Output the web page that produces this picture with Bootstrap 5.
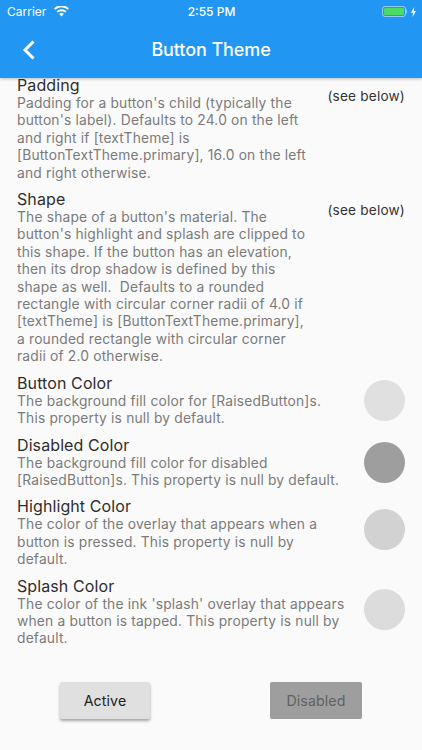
<!DOCTYPE html>
<html lang="en">
<head>
<meta charset="utf-8">
<title>Button Theme</title>
<link href="https://cdn.jsdelivr.net/npm/bootstrap@5.3.0/dist/css/bootstrap.min.css" rel="stylesheet">
<style>
html,body{height:750px;overflow:hidden}
body{width:422px;background:#fafafa;font-family:Inter,"Noto Sans",sans-serif;color:#212121}
.app-top{height:78px;background:#2196f3;color:#fff;box-shadow:0 1px 3px rgba(0,0,0,.25);position:relative;z-index:2}
.status-row{height:22px;padding:1px 6px 0 7px;font-size:12px}
.status-col{flex:1 1 0}
.title-row{height:56px;padding-bottom:2px}
.page-name{font-size:18px;font-weight:500;letter-spacing:-.1px}
.back-btn{left:22px;top:50%;transform:translateY(-50%);line-height:0}
.scroll-area{height:672px;overflow:hidden}
.list-inner{margin-top:-2px;padding:0 17px}
.prop-text{flex:1 1 0;min-width:0}
.prop-text-narrow{max-width:296px}
.prop-name{font-size:16px;line-height:19px;letter-spacing:.1px;color:#2e2e2e}
.prop-desc{font-size:13.8px;line-height:17.4px;letter-spacing:.18px;color:#7a7a7a}
.prop-val{font-size:13.6px;letter-spacing:.2px;color:#333;margin-top:10px;white-space:nowrap}
.swatch{width:41px;height:41px;border-radius:50%;flex:none;margin-left:17px}
.swatch-raised{margin-bottom:6px}
.swatch-a{background:#e0e0e0}.swatch-b{background:#9e9e9e}.swatch-c{background:#d2d2d2}.swatch-d{background:#dcdcdc}
.btn-active,.btn-off{height:37px;font-size:14.2px;font-weight:400;letter-spacing:.1px;border-radius:2px;border:0;padding:0}
.btn-active{width:90px;background:#e0e0e0;color:#212121;box-shadow:0 2px 3px rgba(0,0,0,.35)}
.btn-off{width:92px;background:#9e9e9e;color:#616161}
.btn-bar{padding:0 43px;margin-top:34px}
</style>
</head>
<body>
<header class="app-top">
  <div class="status-row d-flex align-items-center">
    <div class="status-col d-flex align-items-center gap-2">
      <span>Carrier</span>
      <svg width="15" height="11" viewBox="0 0 15 11"><path d="M7.5 10.6 5.2 8a3.2 3.2 0 0 1 4.6 0zM3.9 6.6 2.6 5.2a7 7 0 0 1 9.8 0l-1.3 1.4a5.2 5.2 0 0 0-7.2 0zM1.3 3.8 0 2.4a10.6 10.6 0 0 1 15 0l-1.3 1.4a8.8 8.8 0 0 0-12.4 0z" fill="#fff"/></svg>
    </div>
    <div class="fw-medium">2:55 PM</div>
    <div class="status-col d-flex justify-content-end align-items-center gap-1">
      <svg width="25" height="11" viewBox="0 0 25 11"><rect x=".5" y=".5" width="23" height="10" rx="2.5" fill="none" stroke="#fff" stroke-opacity=".5"/><rect x="2" y="2" width="20" height="7" rx="1.3" fill="#4cd964"/><rect x="23.8" y="3.5" width="1.2" height="4" rx=".6" fill="#fff" fill-opacity=".5"/></svg>
      <svg width="5" height="10" viewBox="0 0 5 10"><path d="M3.2 0 0 5.7h2L1.5 10 5 4H3z" fill="#fff"/></svg>
    </div>
  </div>
  <div class="title-row position-relative d-flex align-items-center justify-content-center">
    <a class="back-btn position-absolute" aria-label="Back">
      <svg width="14" height="22" viewBox="0 0 14 22"><path d="M11.5 2.5 3 11l8.5 8.5" fill="none" stroke="#fff" stroke-width="3"/></svg>
    </a>
    <div class="page-name">Button Theme</div>
  </div>
</header>
<main class="scroll-area d-flex flex-column">
  <div class="list-inner flex-grow-1">
    <div class="d-flex justify-content-between align-items-start mb-2">
      <div class="prop-text prop-text-narrow"><div class="prop-name">Padding</div><div class="prop-desc">Padding for a button's child (typically the button's label). Defaults to 24.0 on the left and right if [textTheme] is [ButtonTextTheme.primary], 16.0 on the left and right otherwise.</div></div>
      <div class="prop-val">(see below)</div>
    </div>
    <div class="d-flex justify-content-between align-items-start mb-2">
      <div class="prop-text prop-text-narrow"><div class="prop-name">Shape</div><div class="prop-desc">The shape of a button's material. The button's highlight and splash are clipped to this shape. If the button has an elevation, then its drop shadow is defined by this shape as well.&nbsp; Defaults to a rounded rectangle with circular corner radii of 4.0 if [textTheme] is [ButtonTextTheme.primary], a rounded rectangle with circular corner radii of 2.0 otherwise.</div></div>
      <div class="prop-val">(see below)</div>
    </div>
    <div class="d-flex justify-content-between align-items-center mb-2">
      <div class="prop-text"><div class="prop-name">Button Color</div><div class="prop-desc">The background fill color for [RaisedButton]s. This property is null by default.</div></div>
      <div class="swatch swatch-a"></div>
    </div>
    <div class="d-flex justify-content-between align-items-center mb-2">
      <div class="prop-text"><div class="prop-name">Disabled Color</div><div class="prop-desc">The background fill color for disabled [RaisedButton]s. This property is null by default.</div></div>
      <div class="swatch swatch-b"></div>
    </div>
    <div class="d-flex justify-content-between align-items-center mb-2">
      <div class="prop-text"><div class="prop-name">Highlight Color</div><div class="prop-desc">The color of the overlay that appears when a button is pressed. This property is null by default.</div></div>
      <div class="swatch swatch-c swatch-raised"></div>
    </div>
    <div class="d-flex justify-content-between align-items-center">
      <div class="prop-text"><div class="prop-name">Splash Color</div><div class="prop-desc">The color of the ink 'splash' overlay that appears when a button is tapped. This property is null by default.</div></div>
      <div class="swatch swatch-d swatch-raised"></div>
    </div>
    <div class="btn-bar d-flex justify-content-between align-items-center">
      <button type="button" class="btn-active">Active</button>
      <button type="button" class="btn-off" disabled>Disabled</button>
    </div>
  </div>
</main>
<script src="https://cdn.jsdelivr.net/npm/bootstrap@5.3.0/dist/js/bootstrap.bundle.min.js"></script>
</body>
</html>
